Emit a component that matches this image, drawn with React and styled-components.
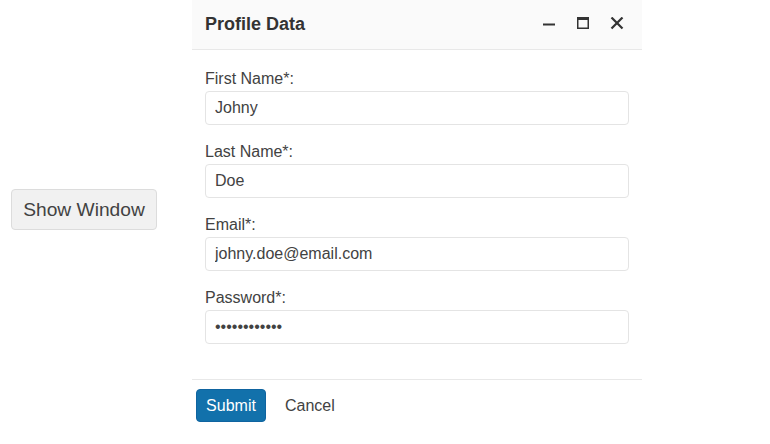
import React from "react";
import styled, { createGlobalStyle } from "styled-components";

const GlobalStyle = createGlobalStyle`
  html, body {
    margin: 0;
    padding: 0;
    background: #ffffff;
    font-family: "Liberation Sans", Arial, sans-serif;
    color: #424242;
  }
  * { box-sizing: border-box; }
`;

const fields = [
  { id: "first", label: "First Name*:", type: "text", value: "Johny" },
  { id: "last", label: "Last Name*:", type: "text", value: "Doe" },
  { id: "email", label: "Email*:", type: "email", value: "johny.doe@email.com" },
  { id: "password", label: "Password*:", type: "password", value: "johnydoepass" },
];

const MinimizeIcon = () => (
  <svg width="14" height="14" viewBox="0 0 14 14">
    <rect x="1" y="6.5" width="12" height="2" fill="currentColor" />
  </svg>
);

const MaximizeIcon = () => (
  <svg width="14" height="14" viewBox="0 0 14 14">
    <rect x="1.75" y="0.75" width="10.5" height="10.5" fill="none" stroke="currentColor" strokeWidth="1.5" />
    <rect x="1" y="0" width="12" height="3" fill="currentColor" />
  </svg>
);

const CloseIcon = () => (
  <svg width="14" height="14" viewBox="0 0 14 14">
    <path d="M1.5 0.5 L12.5 11.5 M12.5 0.5 L1.5 11.5" stroke="currentColor" strokeWidth="2.2" fill="none" />
  </svg>
);

const App = () => {
  return (
    <>
      <GlobalStyle />
      <Page>
        <ShowButton>Show Window</ShowButton>
        <Window>
          <TitleBar>
            <Title>Profile Data</Title>
            <Actions>
              <ActionBtn aria-label="Minimize"><MinimizeIcon /></ActionBtn>
              <ActionBtn aria-label="Maximize"><MaximizeIcon /></ActionBtn>
              <ActionBtn aria-label="Close"><CloseIcon /></ActionBtn>
            </Actions>
          </TitleBar>
          <Content>
            {fields.map((f) => (
              <Field key={f.id}>
                <Label htmlFor={f.id}>{f.label}</Label>
                <Input id={f.id} type={f.type} defaultValue={f.value} />
              </Field>
            ))}
          </Content>
          <Footer>
            <SubmitBtn>Submit</SubmitBtn>
            <FlatBtn>Cancel</FlatBtn>
          </Footer>
        </Window>
      </Page>
    </>
  );
};

const Page = styled.div`
  display: flex;
  align-items: flex-start;
  padding-left: 11px;
  height: 444px;
  overflow: hidden;
`;

const ShowButton = styled.button`
  margin-top: 189px;
  height: 41px;
  width: 146px;
  padding: 0;
  font-family: "Liberation Sans", Arial, sans-serif;
  font-size: 19.2px;
  color: #424242;
  background: #f1f1f1;
  border: 1px solid #dcdcdc;
  border-radius: 4px;
`;

const Window = styled.div`
  margin-left: 35px;
  width: 450px;
  display: flex;
  flex-direction: column;
  background: #ffffff;
`;

const TitleBar = styled.div`
  height: 50px;
  display: flex;
  align-items: center;
  justify-content: space-between;
  padding: 0 8px 1px 13px;
  background: #fafafa;
  border-bottom: 1px solid #e8e8e8;
`;

const Title = styled.div`
  font-size: 18px;
  font-weight: bold;
  color: #333333;
`;

const Actions = styled.div`
  display: flex;
`;

const ActionBtn = styled.button`
  width: 34px;
  height: 30px;
  display: flex;
  align-items: center;
  justify-content: center;
  padding: 0;
  border: none;
  background: transparent;
  color: #333333;
`;

const Content = styled.div`
  padding: 18px 13px 35px 13px;
  display: flex;
  flex-direction: column;
  gap: 16px;
`;

const Field = styled.div`
  display: flex;
  flex-direction: column;
  gap: 1px;
`;

const Label = styled.label`
  font-size: 16px;
  line-height: 22px;
  color: #424242;
`;

const Input = styled.input`
  height: 34px;
  width: 424px;
  padding: 0 9px;
  font-family: "Liberation Sans", Arial, sans-serif;
  font-size: 16px;
  color: #424242;
  background: #ffffff;
  border: 1px solid #e4e4e4;
  border-radius: 4px;
  outline: none;
`;

const Footer = styled.div`
  border-top: 1px solid #e8e8e8;
  padding: 9px 4px;
  display: flex;
  align-items: center;
  gap: 8px;
`;

const SubmitBtn = styled.button`
  width: 70px;
  height: 33px;
  padding: 0;
  font-family: "Liberation Sans", Arial, sans-serif;
  font-size: 16px;
  color: #ffffff;
  background: #1271ab;
  border: 1px solid #0f64a0;
  border-radius: 4px;
`;

const FlatBtn = styled.button`
  height: 33px;
  padding: 0 11px;
  font-family: "Liberation Sans", Arial, sans-serif;
  font-size: 16px;
  color: #424242;
  background: transparent;
  border: none;
`;

export default App;
